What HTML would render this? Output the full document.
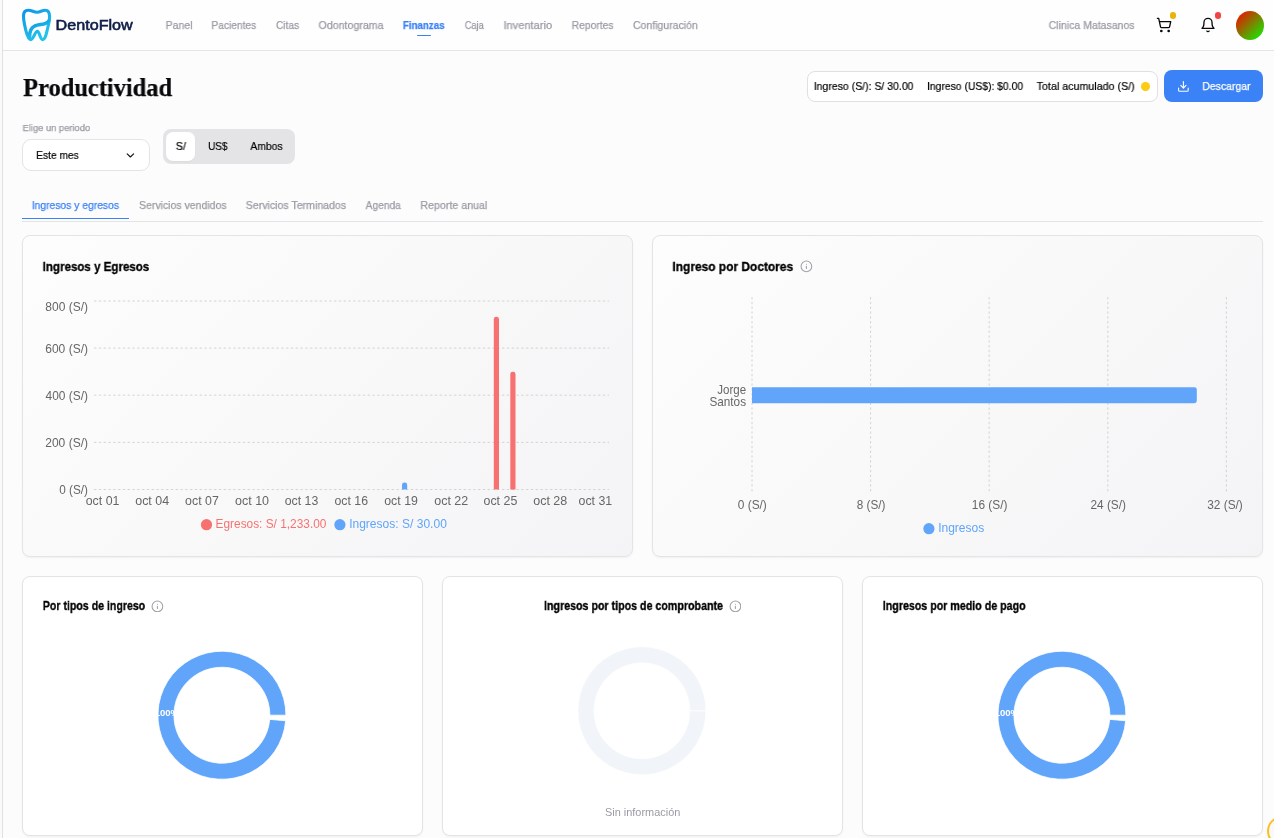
<!DOCTYPE html>
<html lang="es">
<head>
<meta charset="utf-8">
<title>DentoFlow - Productividad</title>
<style>
*{box-sizing:border-box}
html,body{margin:0;padding:0}
html{width:1274px;height:838px;overflow:hidden}
body{width:1274px;height:838px;overflow:hidden;position:relative;background:#fbfafa;font-family:'Liberation Sans',sans-serif;font-size:11.2px;color:#18181b}
.app{position:absolute;left:2px;top:0;width:1272px;height:838px;border-left:1px solid #e2e0e1;background:#fcfcfc;overflow:hidden}
header{position:absolute;left:0;top:0;width:1271px;height:51px;background:#fefefe;border-bottom:1px solid #e5e5e8}
main{position:absolute;left:0;top:51px;width:1271px;height:787px}
.t{position:absolute;white-space:nowrap;line-height:16px;will-change:transform;-webkit-text-stroke:0.25px currentColor;transform-origin:0 50%;margin:0;padding:0;text-decoration:none;display:block}
.g{color:#9a9aa4}
.d{color:#000;-webkit-text-stroke:0.2px #000}
.b{font-weight:700;color:#000;-webkit-text-stroke:0.35px #000}
.abs{position:absolute}
.logo-txt{color:#0e1d46;-webkit-text-stroke:0.6px #0e1d46}
.on{color:#3b82f6}
nav a.on{font-weight:700}
.uline{position:absolute;height:1px;background:#3b82f6}
.dot{position:absolute;border-radius:50%}
.avatar{position:absolute;left:1233px;top:11px;width:28px;height:29px;border-radius:50%;background:linear-gradient(135deg,#ff0000,#00ff00)}
h1{font-family:'Liberation Serif',serif;font-weight:700;color:#09090b}
.summary{position:absolute;left:804px;top:20px;width:351px;height:31px;border:1px solid #e0e0e4;border-radius:8px;background:#fff}
.btn{position:absolute;left:1161px;top:19px;width:99px;height:32px;border:0;border-radius:8px;background:#3b82f6;padding:0}
.select{position:absolute;left:19px;top:88px;width:128px;height:32px;border:1px solid #e4e4e7;border-radius:9px;background:#fff}
.toggle{position:absolute;left:160px;top:78px;width:132px;height:35px;border-radius:8px;background:#e4e4e7}
.toggle .pill{position:absolute;left:3px;top:3px;width:29px;height:29px;border-radius:7px;background:#fff;box-shadow:0 1px 2px rgba(0,0,0,.04)}
.tabs{position:absolute;left:19px;top:140px;width:1241px;height:31px;border-bottom:1px solid #e4e4e7}
.card{position:absolute;border:1px solid #e4e4e7;border-radius:8px;background:#fff;box-shadow:0 1px 2px rgba(0,0,0,.05);overflow:hidden}
.card.grad{background:linear-gradient(135deg,#fdfdfd 0%,#f4f4f6 100%)}
.card svg.chart{position:absolute;left:-1px;top:-1px}
.card svg text{font-family:'Liberation Sans',sans-serif}
.fab{position:absolute;left:1264px;top:765px;width:30px;height:30px;border-radius:50%;border:2px solid #fbbf24;background:#faf8f8}
</style>
</head>
<body>
<div class="app">
<header>
<a class="abs" href="#" style="left:0;top:0;width:140px;height:50px" aria-label="DentoFlow">
<svg class="abs" style="left:13px;top:4px" width="42" height="42" viewBox="0 0 838 838" fill="none" stroke-linecap="round" stroke-linejoin="round">
<defs><linearGradient id="tg" x1="0" y1="0" x2="0.6" y2="1"><stop offset="0" stop-color="#0c96ea"/><stop offset="1" stop-color="#25c3e9"/></linearGradient></defs>
<path d="M150 240C150 150 200 125 245 125C320 125 350 165 420 165C490 165 510 125 585 125C640 125 670 170 670 250C670 350 640 450 620 530C600 620 580 710 530 710C480 710 470 545 425 545C380 545 350 710 295 710C240 710 215 600 195 520C170 420 150 330 150 240Z" stroke="url(#tg)" stroke-width="62"/>
<path d="M655 335C600 425 470 395 380 435C300 470 268 545 272 660" stroke="url(#tg)" stroke-width="70"/>
</svg>
<span class="t logo-txt" style="left:52px;top:17px;font-size:15.4px;transform:translateX(0.59px) scaleX(1.0487)">DentoFlow</span>
</a>
<nav>
<a class="t g" href="#" style="left:162px;top:17px;font-size:11.2px;transform:translateX(0.68px) scaleX(0.9333)">Panel</a>
<a class="t g" href="#" style="left:208px;top:17px;font-size:11.2px;transform:translateX(0.40px) scaleX(0.9128)">Pacientes</a>
<a class="t g" href="#" style="left:273px;top:17px;font-size:11.2px;transform:translateX(0.05px) scaleX(0.9015)">Citas</a>
<a class="t g" href="#" style="left:315px;top:17px;font-size:11.2px;transform:translateX(0.52px) scaleX(0.9500)">Odontograma</a>
<a class="t on" href="#" style="left:399px;top:17px;font-size:11.2px;transform:translateX(0.85px) scaleX(0.8706)">Finanzas</a>
<a class="t g" href="#" style="left:461px;top:17px;font-size:11.2px;transform:translateX(0.79px) scaleX(0.8222)">Caja</a>
<a class="t g" href="#" style="left:500px;top:17px;font-size:11.2px;transform:translateX(0.51px) scaleX(0.9885)">Inventario</a>
<a class="t g" href="#" style="left:568px;top:17px;font-size:11.2px;transform:translateX(0.69px) scaleX(0.9224)">Reportes</a>
<a class="t g" href="#" style="left:630px;top:17px;font-size:11.2px;transform:translateX(0.03px) scaleX(0.9385)">Configuración</a>
<i class="uline" style="left:414px;top:35px;width:14px;border-radius:1px"></i>
</nav>
<span class="t g" style="left:1045px;top:17px;font-size:11.2px;transform:translateX(0.73px) scaleX(0.9392)">Clinica Matasanos</span>
<svg class="abs" style="left:1153px;top:17px" width="16" height="16" viewBox="0 0 24 24" fill="none" stroke="#09090b" stroke-width="2" stroke-linecap="round" stroke-linejoin="round"><circle cx="8" cy="21" r="1"/><circle cx="19" cy="21" r="1"/><path d="M2.05 2.05h2l2.66 12.42a2 2 0 0 0 2 1.58h9.78a2 2 0 0 0 1.95-1.57l1.65-7.43H5.12"/></svg>
<i class="dot" style="left:1166.8px;top:12.2px;width:6.4px;height:6.4px;background:#eab308;box-shadow:0 0 0 1px #fffdf5"></i>
<svg class="abs" style="left:1197px;top:17px" width="16" height="16" viewBox="0 0 24 24" fill="none" stroke="#09090b" stroke-width="2" stroke-linecap="round" stroke-linejoin="round"><path d="M6 8a6 6 0 0 1 12 0c0 7 3 9 3 9H3s3-2 3-9"/><path d="M10.3 21a1.94 1.94 0 0 0 3.4 0"/></svg>
<i class="dot" style="left:1211.8px;top:12.2px;width:6.4px;height:6.4px;background:#ef4444;box-shadow:0 0 0 1px #fff5f5"></i>
<div class="avatar"></div>
</header>
<main>
<h1 class="t" style="left:20px;top:29px;font-size:26px;transform:translateX(0.15px) scaleX(0.9401);color:#09090b">Productividad</h1>
<div class="summary">
<span class="t d" style="left:5px;top:6px;font-size:11.2px;transform:translateX(0.76px) scaleX(0.9381)">Ingreso (S/): S/ 30.00</span>
<span class="t d" style="left:119px;top:6px;font-size:11.2px;transform:translateX(0.08px) scaleX(0.9239)">Ingreso (US$): $0.00</span>
<span class="t d" style="left:228px;top:6px;font-size:11.2px;transform:translateX(0.66px) scaleX(0.9563)">Total acumulado (S/)</span>
<i class="dot" style="left:333.2px;top:10px;width:8.8px;height:8.8px;background:#facc15"></i>
</div>
<button class="btn" type="button">
<svg class="abs" style="left:13.2px;top:10px" width="12.8" height="12.8" viewBox="0 0 24 24" fill="none" stroke="#fff" stroke-width="2" stroke-linecap="round" stroke-linejoin="round"><path d="M21 15v4a2 2 0 0 1-2 2H5a2 2 0 0 1-2-2v-4"/><polyline points="7 10 12 15 17 10"/><line x1="12" y1="15" x2="12" y2="3"/></svg>
<span class="t" style="left:38px;top:8px;font-size:11.2px;transform:translateX(0.39px) scaleX(0.9304);color:#fff">Descargar</span>
</button>
<label class="t g" style="left:19px;top:69px;font-size:9.6px;transform:translateX(0.57px) scaleX(0.9744)">Elige un periodo</label>
<div class="select">
<span class="t d" style="left:13px;top:7px;font-size:11.2px;transform:translateX(0.20px) scaleX(0.9124)">Este mes</span>
<svg class="abs" style="left:101px;top:9.2px" width="12.8" height="12.8" viewBox="0 0 24 24" fill="none" stroke="#18181b" stroke-width="2.2" stroke-linecap="round" stroke-linejoin="round"><polyline points="6 9 12 15 18 9"/></svg>
</div>
<div class="toggle"><i class="pill"></i>
<span class="t d" style="left:12px;top:9px;font-size:11.2px;transform:translateX(0.72px) scaleX(0.9679)">S/</span>
<span class="t d" style="left:45px;top:9px;font-size:11.2px;transform:translateX(0.23px) scaleX(0.8819)">US$</span>
<span class="t d" style="left:87px;top:9px;font-size:11.2px;transform:translateX(0.40px) scaleX(0.9246)">Ambos</span>
</div>
<div class="tabs" role="tablist">
<span class="t on" role="tab" aria-selected="true" style="left:9px;top:6px;font-size:11.2px;transform:translateX(0.78px) scaleX(0.9224)">Ingresos y egresos</span>
<span class="t g" role="tab" style="left:117px;top:6px;font-size:11.2px;transform:translateX(0.03px) scaleX(0.9386)">Servicios vendidos</span>
<span class="t g" role="tab" style="left:223px;top:6px;font-size:11.2px;transform:translateX(0.73px) scaleX(0.9463)">Servicios Terminados</span>
<span class="t g" role="tab" style="left:343px;top:6px;font-size:11.2px;transform:translateX(0.60px) scaleX(0.9139)">Agenda</span>
<span class="t g" role="tab" style="left:398px;top:6px;font-size:11.2px;transform:translateX(0.37px) scaleX(0.9527)">Reporte anual</span>
<i class="uline" style="left:0;top:27px;width:107px"></i>
</div>
<section class="card grad" style="left:19px;top:184px;width:611px;height:322px">
<h3 class="t b" style="left:19px;top:23px;font-size:13.6px;transform:translateX(0.66px) scaleX(0.8500)">Ingresos y Egresos</h3>
<svg class="chart" width="611" height="322" viewBox="22 235 611 322">
<g stroke="#ccc" stroke-width="0.8" stroke-dasharray="2.4 2.4" fill="none">
<line x1="94" y1="301" x2="609" y2="301"/>
<line x1="94" y1="348.1" x2="609" y2="348.1"/>
<line x1="94" y1="395.2" x2="609" y2="395.2"/>
<line x1="94" y1="442.4" x2="609" y2="442.4"/>
<line x1="94" y1="489.5" x2="609" y2="489.5"/>
</g>
<path d="M402 489.5V484.9Q402 482.5 404.4 482.5H404.8Q407.2 482.5 407.2 484.9V489.5Z" fill="#60a5fa"/>
<path d="M493.8 489.5V319.2Q493.8 316.8 496.2 316.8H496.6Q499 316.8 499 319.2V489.5Z" fill="#f87171"/>
<path d="M510.3 489.5V374.1Q510.3 371.7 512.7 371.7H513.1Q515.5 371.7 515.5 374.1V489.5Z" fill="#f87171"/>
<text x="45.33" y="311" font-size="12.8" fill="#666" textLength="42.7" lengthAdjust="spacingAndGlyphs">800 (S/)</text>
<text x="45.21" y="353" font-size="12.8" fill="#666" textLength="42.82" lengthAdjust="spacingAndGlyphs">600 (S/)</text>
<text x="45.57" y="400" font-size="12.8" fill="#666" textLength="42.46" lengthAdjust="spacingAndGlyphs">400 (S/)</text>
<text x="45.21" y="447" font-size="12.8" fill="#666" textLength="42.82" lengthAdjust="spacingAndGlyphs">200 (S/)</text>
<text x="59.24" y="494" font-size="12.8" fill="#666" textLength="28.79" lengthAdjust="spacingAndGlyphs">0 (S/)</text>
<text x="85.72" y="505" font-size="12.8" fill="#666" textLength="33.69" lengthAdjust="spacingAndGlyphs">oct 01</text>
<text x="135.21" y="505" font-size="12.8" fill="#666" textLength="33.95" lengthAdjust="spacingAndGlyphs">oct 04</text>
<text x="185.12" y="505" font-size="12.8" fill="#666" textLength="33.69" lengthAdjust="spacingAndGlyphs">oct 07</text>
<text x="235.01" y="505" font-size="12.8" fill="#666" textLength="34.08" lengthAdjust="spacingAndGlyphs">oct 10</text>
<text x="284.72" y="505" font-size="12.8" fill="#666" textLength="33.56" lengthAdjust="spacingAndGlyphs">oct 13</text>
<text x="334.52" y="505" font-size="12.8" fill="#666" textLength="33.56" lengthAdjust="spacingAndGlyphs">oct 16</text>
<text x="384.22" y="505" font-size="12.8" fill="#666" textLength="33.69" lengthAdjust="spacingAndGlyphs">oct 19</text>
<text x="434.21" y="505" font-size="12.8" fill="#666" textLength="34" lengthAdjust="spacingAndGlyphs">oct 22</text>
<text x="483.52" y="505" font-size="12.8" fill="#666" textLength="33.77" lengthAdjust="spacingAndGlyphs">oct 25</text>
<text x="533.21" y="505" font-size="12.8" fill="#666" textLength="34.08" lengthAdjust="spacingAndGlyphs">oct 28</text>
<text x="578.52" y="505" font-size="12.8" fill="#666" textLength="33.69" lengthAdjust="spacingAndGlyphs">oct 31</text>
<circle cx="206.5" cy="524.7" r="5.6" fill="#f87171"/>
<text x="215.57" y="528" font-size="12.8" fill="#f87171" textLength="110.81" lengthAdjust="spacingAndGlyphs">Egresos: S/ 1,233.00</text>
<circle cx="339.9" cy="524.7" r="5.6" fill="#60a5fa"/>
<text x="349.14" y="528" font-size="12.8" fill="#60a5fa" textLength="97.73" lengthAdjust="spacingAndGlyphs">Ingresos: S/ 30.00</text>
</svg>
</section>
<section class="card grad" style="left:649px;top:184px;width:611px;height:322px">
<h3 class="t b" style="left:19px;top:23px;font-size:13.6px;transform:translateX(0.43px) scaleX(0.8779)">Ingreso por Doctores</h3>
<svg class="abs" style="left:146.9px;top:23.8px" width="12.8" height="12.8" viewBox="0 0 24 24" fill="none" stroke="#a1a1aa" stroke-width="2" stroke-linecap="round" stroke-linejoin="round"><circle cx="12" cy="12" r="10"/><path d="M12 16v-4"/><path d="M12 8h.01"/></svg>
<svg class="chart" width="611" height="322" viewBox="652 235 611 322">
<g stroke="#ccc" stroke-width="0.8" stroke-dasharray="2.4 2.4" fill="none">
<line x1="752" y1="297" x2="752" y2="491.8"/>
<line x1="870.6" y1="297" x2="870.6" y2="491.8"/>
<line x1="989.2" y1="297" x2="989.2" y2="491.8"/>
<line x1="1107.8" y1="297" x2="1107.8" y2="491.8"/>
<line x1="1226.4" y1="297" x2="1226.4" y2="491.8"/>
</g>
<path d="M752 387.2H1194.4Q1196.8 387.2 1196.8 389.6V400.8Q1196.8 403.2 1194.4 403.2H752Z" fill="#60a5fa"/>
<text x="717.28" y="393.9" font-size="12.8" fill="#666" textLength="28.79" lengthAdjust="spacingAndGlyphs">Jorge</text>
<text x="709.43" y="405.8" font-size="12.8" fill="#666" textLength="36.6" lengthAdjust="spacingAndGlyphs">Santos</text>
<text x="737.74" y="509" font-size="12.8" fill="#666" textLength="29.11" lengthAdjust="spacingAndGlyphs">0 (S/)</text>
<text x="856.74" y="509" font-size="12.8" fill="#666" textLength="28.79" lengthAdjust="spacingAndGlyphs">8 (S/)</text>
<text x="971.77" y="509" font-size="12.8" fill="#666" textLength="35.76" lengthAdjust="spacingAndGlyphs">16 (S/)</text>
<text x="1090.42" y="509" font-size="12.8" fill="#666" textLength="35.6" lengthAdjust="spacingAndGlyphs">24 (S/)</text>
<text x="1207.24" y="509" font-size="12.8" fill="#666" textLength="35.59" lengthAdjust="spacingAndGlyphs">32 (S/)</text>
<circle cx="928.9" cy="528.7" r="5.6" fill="#60a5fa"/>
<text x="938.14" y="532" font-size="12.8" fill="#60a5fa" textLength="46.1" lengthAdjust="spacingAndGlyphs">Ingresos</text>
</svg>
</section>
<section class="card" style="left:19px;top:525px;width:401px;height:260px">
<h3 class="t b" style="left:19px;top:21px;font-size:13.6px;transform:translateX(0.82px) scaleX(0.7792)">Por tipos de ingreso</h3>
<svg class="abs" style="left:128.1px;top:22.6px" width="12.8" height="12.8" viewBox="0 0 24 24" fill="none" stroke="#a1a1aa" stroke-width="2" stroke-linecap="round" stroke-linejoin="round"><circle cx="12" cy="12" r="10"/><path d="M12 16v-4"/><path d="M12 8h.01"/></svg>
<svg class="chart" width="401" height="260" viewBox="22 576 401 260">
<path d="M285.90 715.20A64 64 0 1 0 285.66 720.78L269.72 719.38A48 48 0 1 1 269.90 715.20Z" fill="#60a5fa" stroke="#fff" stroke-width="0.8"/>
<text x="166.9" y="716" font-size="9.8" font-weight="700" fill="#fff" text-anchor="middle" textLength="24.4" lengthAdjust="spacingAndGlyphs">100%</text>
</svg>
</section>
<section class="card" style="left:439px;top:525px;width:401px;height:260px">
<h3 class="t b" style="left:101px;top:21px;font-size:13.6px;transform:translateX(0.01px) scaleX(0.7846)">Ingresos por tipos de comprobante</h3>
<svg class="abs" style="left:285.7px;top:22.6px" width="12.8" height="12.8" viewBox="0 0 24 24" fill="none" stroke="#a1a1aa" stroke-width="2" stroke-linecap="round" stroke-linejoin="round"><circle cx="12" cy="12" r="10"/><path d="M12 16v-4"/><path d="M12 8h.01"/></svg>
<svg class="chart" width="401" height="260" viewBox="442 576 401 260">
<path d="M705.90 710.80A64 64 0 1 0 705.90 710.81L689.90 710.81A48 48 0 1 1 689.90 710.80Z" fill="#f1f5f9" stroke="#fff" stroke-width="0.6"/>
<text x="605.01" y="815.5" font-size="11.2" fill="#9a9aa4" textLength="75.31" lengthAdjust="spacingAndGlyphs">Sin información</text>
</svg>
</section>
<section class="card" style="left:859px;top:525px;width:401px;height:260px">
<h3 class="t b" style="left:19px;top:21px;font-size:13.6px;transform:translateX(0.81px) scaleX(0.7845)">Ingresos por medio de pago</h3>
<svg class="chart" width="401" height="260" viewBox="862 576 401 260">
<path d="M1125.90 715.20A64 64 0 1 0 1125.66 720.78L1109.72 719.38A48 48 0 1 1 1109.90 715.20Z" fill="#60a5fa" stroke="#fff" stroke-width="0.8"/>
<text x="1006.9" y="716" font-size="9.8" font-weight="700" fill="#fff" text-anchor="middle" textLength="24.4" lengthAdjust="spacingAndGlyphs">100%</text>
</svg>
</section>
<div class="fab"></div>
</main>
</div>
</body>
</html>
